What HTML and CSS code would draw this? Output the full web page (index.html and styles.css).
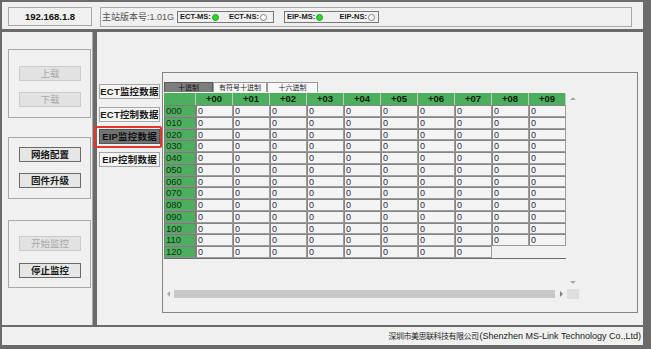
FILE: index.html
```html
<!DOCTYPE html>
<html lang="zh-CN">
<head>
<meta charset="utf-8">
<title>监控</title>
<link rel="stylesheet" href="styles.css">
</head>
<body>
<div class="app">
  <header class="topbar">
    <div class="ip">192.168.1.8</div>
    <div class="info">
      <span class="ver">主站版本号:1.01G</span>
      <div class="leds ect">
        <span class="led-label">ECT-MS:</span><span class="led on"></span>
        <span class="led-label second">ECT-NS:</span><span class="led"></span>
      </div>
      <div class="leds eip">
        <span class="led-label">EIP-MS:</span><span class="led on"></span>
        <span class="led-label second">EIP-NS:</span><span class="led"></span>
      </div>
    </div>
  </header>

  <div class="main">
    <aside class="side">
      <div class="group g1">
        <button class="btn" disabled>上载</button>
        <button class="btn" disabled>下载</button>
      </div>
      <div class="group g2">
        <button class="btn">网络配置</button>
        <button class="btn">固件升级</button>
      </div>
      <div class="group g3">
        <button class="btn" disabled>开始监控</button>
        <button class="btn">停止监控</button>
      </div>
    </aside>

    <section class="content">
      <nav class="views">
        <button class="view">ECT监控数据</button>
        <button class="view">ECT控制数据</button>
        <button class="view active">EIP监控数据</button>
        <button class="view">EIP控制数据</button>
      </nav>

      <div class="panel">
        <div class="gridctl">
          <div class="gtabs">
            <span class="gtab sel">十进制</span>
            <span class="gtab">有符号十进制</span>
            <span class="gtab">十六进制</span>
          </div>
          <div class="gview">
            <div class="grid">
              <div class="hc"></div><div class="hc">+00</div><div class="hc">+01</div><div class="hc">+02</div><div class="hc">+03</div><div class="hc">+04</div><div class="hc">+05</div><div class="hc">+06</div><div class="hc">+07</div><div class="hc">+08</div><div class="hc">+09</div>
              <div class="rl">000</div><div class="c">0</div><div class="c">0</div><div class="c">0</div><div class="c">0</div><div class="c">0</div><div class="c">0</div><div class="c">0</div><div class="c">0</div><div class="c">0</div><div class="c">0</div>
              <div class="rl">010</div><div class="c">0</div><div class="c">0</div><div class="c">0</div><div class="c">0</div><div class="c">0</div><div class="c">0</div><div class="c">0</div><div class="c">0</div><div class="c">0</div><div class="c">0</div>
              <div class="rl">020</div><div class="c">0</div><div class="c">0</div><div class="c">0</div><div class="c">0</div><div class="c">0</div><div class="c">0</div><div class="c">0</div><div class="c">0</div><div class="c">0</div><div class="c">0</div>
              <div class="rl">030</div><div class="c">0</div><div class="c">0</div><div class="c">0</div><div class="c">0</div><div class="c">0</div><div class="c">0</div><div class="c">0</div><div class="c">0</div><div class="c">0</div><div class="c">0</div>
              <div class="rl">040</div><div class="c">0</div><div class="c">0</div><div class="c">0</div><div class="c">0</div><div class="c">0</div><div class="c">0</div><div class="c">0</div><div class="c">0</div><div class="c">0</div><div class="c">0</div>
              <div class="rl">050</div><div class="c">0</div><div class="c">0</div><div class="c">0</div><div class="c">0</div><div class="c">0</div><div class="c">0</div><div class="c">0</div><div class="c">0</div><div class="c">0</div><div class="c">0</div>
              <div class="rl">060</div><div class="c">0</div><div class="c">0</div><div class="c">0</div><div class="c">0</div><div class="c">0</div><div class="c">0</div><div class="c">0</div><div class="c">0</div><div class="c">0</div><div class="c">0</div>
              <div class="rl">070</div><div class="c">0</div><div class="c">0</div><div class="c">0</div><div class="c">0</div><div class="c">0</div><div class="c">0</div><div class="c">0</div><div class="c">0</div><div class="c">0</div><div class="c">0</div>
              <div class="rl">080</div><div class="c">0</div><div class="c">0</div><div class="c">0</div><div class="c">0</div><div class="c">0</div><div class="c">0</div><div class="c">0</div><div class="c">0</div><div class="c">0</div><div class="c">0</div>
              <div class="rl">090</div><div class="c">0</div><div class="c">0</div><div class="c">0</div><div class="c">0</div><div class="c">0</div><div class="c">0</div><div class="c">0</div><div class="c">0</div><div class="c">0</div><div class="c">0</div>
              <div class="rl">100</div><div class="c">0</div><div class="c">0</div><div class="c">0</div><div class="c">0</div><div class="c">0</div><div class="c">0</div><div class="c">0</div><div class="c">0</div><div class="c">0</div><div class="c">0</div>
              <div class="rl">110</div><div class="c">0</div><div class="c">0</div><div class="c">0</div><div class="c">0</div><div class="c">0</div><div class="c">0</div><div class="c">0</div><div class="c">0</div><div class="c">0</div><div class="c">0</div>
              <div class="rl">120</div><div class="c">0</div><div class="c">0</div><div class="c">0</div><div class="c">0</div><div class="c">0</div><div class="c">0</div><div class="c">0</div><div class="c">0</div>
            </div>
            <div class="vscroll"><span class="arr up"></span><span class="arr down"></span></div>
          </div>
          <div class="hscroll">
            <span class="harr"><span class="arr left"></span></span>
            <span class="thumb"></span>
            <span class="harr"><span class="arr right"></span></span>
            <span class="corner"></span>
          </div>
        </div>
      </div>
    </section>
  </div>

  <footer class="status"><span class="cn">深圳市美思联科技有限公司</span>(Shenzhen MS-Link Technology Co.,Ltd)</footer>
</div>
</body>
</html>
```

FILE: styles.css
```css
* { box-sizing: border-box; margin: 0; padding: 0; }
html, body { width: 651px; height: 349px; overflow: hidden; }
body {
  background: #6b6b6b;
  font-family: "Liberation Sans", "Noto Sans CJK SC", sans-serif;
  color: #111;
}
button { font-family: inherit; cursor: default; }

.app {
  height: 349px;
  display: flex;
  flex-direction: column;
  padding: 2px 8px 4px 2px;
}

/* ---------- top bar ---------- */
.topbar {
  height: 27px;
  background: #f0f0f0;
  display: flex;
  align-items: flex-start;
  padding: 5px 0 0 6px;
  gap: 8px;
}
.ip {
  width: 84px;
  height: 19px;
  border: 1px solid #a8a8a8;
  font-weight: bold;
  font-size: 9.5px;
  line-height: 17px;
  text-align: center;
}
.info {
  width: 532px;
  height: 20px;
  border: 1px solid #a8a8a8;
  display: flex;
  align-items: center;
  padding-left: 1px;
}
.ver { font-size: 9px; color: #555; margin-right: 3px; line-height: 12px; }
.leds {
  height: 12px;
  border: 1px solid #777;
  display: flex;
  align-items: center;
  padding-left: 2px;
  font-weight: bold;
  font-size: 7.5px;
  color: #1a1a1a;
}
.leds.ect { width: 97px; }
.leds.eip { width: 95px; margin-left: 10px; }
.led-label { line-height: 10px; }
.ect .second { margin-left: 10px; }
.eip .second { margin-left: 16px; }
.led {
  width: 7px;
  height: 7px;
  border-radius: 50%;
  border: 1px solid #808080;
  background: #fff;
  margin-left: 1px;
}
.led.on { background: #22dd22; border-color: #2a9a2a; }

/* ---------- main ---------- */
.main {
  margin-top: 3px;
  height: 293px;
  display: flex;
  gap: 4px;
}
.side {
  width: 91px;
  background: #f0f0f0;
  border-right: 1px solid #a8a8a8;
  padding: 17px 0 0 6px;
  display: flex;
  flex-direction: column;
}
.group {
  width: 83px;
  border: 1px solid #a8a8a8;
  display: flex;
  flex-direction: column;
  align-items: flex-start;
  padding-left: 10px;
}
.g1 { height: 69px; padding-top: 16px; gap: 11px; }
.g2 { height: 62px; margin-top: 19px; padding-top: 9px; gap: 11px; }
.g3 { height: 68px; margin-top: 21px; padding-top: 15px; gap: 12px; }
.btn {
  width: 62px;
  height: 15px;
  border: 1px solid #6a6a6a;
  background: #e6e6e6;
  font-size: 9.5px;
  font-weight: bold;
  line-height: 13px;
  color: #1a1a1a;
}
.btn:disabled {
  border-color: #cccccc;
  background: #e2e2e2;
  color: #a8a8a8;
  font-weight: normal;
}

.content {
  width: 546px;
  background: #f0f0f0;
  display: flex;
}
.views {
  width: 65px;
  padding: 52px 0 0 2px;
  display: flex;
  flex-direction: column;
  gap: 7.5px;
}
.view {
  width: 61px;
  height: 15px;
  border: 1px solid #a6a6a6;
  background: #f4f4f4;
  font-size: 9.5px;
  font-weight: bold;
  line-height: 13px;
  color: #1a1a1a;
  letter-spacing: 0.2px;
}
.view.active {
  position: relative;
  background: #727272;
  border-color: #555;
  color: #111;
}
.view.active::after {
  content: "";
  position: absolute;
  left: -6px;
  right: -3px;
  top: -4px;
  bottom: -5px;
  border: 2px solid #e8352c;
  border-radius: 2px;
}

/* ---------- data panel ---------- */
.panel {
  margin-top: 40px;
  width: 476px;
  height: 241px;
  border: 1px solid #858585;
  padding-top: 9px;
}
.gridctl { width: 416px; display: flex; flex-direction: column; }
.gtabs { height: 11px; display: flex; padding-left: 1px; align-items: flex-start; }
.gtab {
  height: 10px;
  border: 1px solid #9a9a9a;
  border-bottom: none;
  background: #f8f8f8;
  font-size: 7px;
  line-height: 9px;
  text-align: center;
  color: #222;
}
.gtab:nth-child(1) { width: 49px; }
.gtab:nth-child(2) { width: 54px; }
.gtab:nth-child(3) { width: 51px; }
.gtab.sel { background: #7d7d7d; border-color: #5a5a5a; color: #111; }

.gview { height: 196px; display: flex; }
.grid {
  margin-left: 1px;
  width: 402px;
  align-self: flex-start;
  display: grid;
  grid-template-columns: 32px repeat(10, 37px);
  grid-template-rows: 12px;
  grid-auto-rows: 11.75px;
  border-bottom: 1px solid #6e6e6e;
  margin-right: 1px;
}
.hc {
  background: #4caf5e;
  border-right: 1px solid #c4c4c4;
  font-weight: bold;
  font-size: 9.5px;
  line-height: 12px;
  text-align: center;
  color: #0c1a0c;
}
.rl {
  background: #4caf5e;
  border: 1px solid #7c7c7c;
  border-bottom-color: #8c8c8c;
  font-size: 9.5px;
  line-height: 10px;
  padding-left: 1px;
  color: #143014;
}
.c {
  background: #f4f4f4;
  border: 1px solid #858585;
  border-right-color: #9c9c9c;
  border-bottom-color: #9c9c9c;
  font-size: 9px;
  line-height: 10px;
  padding-left: 1px;
  color: #2b2b45;
}
.vscroll {
  width: 12px;
  height: 196px;
  display: flex;
  flex-direction: column;
  justify-content: space-between;
  align-items: center;
  padding: 4px 0 5px;
}
.arr { width: 0; height: 0; border: 3px solid transparent; }
.arr.up { border-bottom-color: #a8a8a8; border-top-width: 0; }
.arr.down { border-top-color: #a8a8a8; border-bottom-width: 0; }
.arr.left { border-right-color: #a8a8a8; border-left-width: 0; }
.arr.right { border-left-color: #808080; border-right-width: 0; }
.hscroll { height: 10px; display: flex; }
.harr { width: 11px; display: flex; align-items: center; justify-content: center; }
.harr:nth-of-type(3) { width: 12px; }
.thumb { width: 381px; height: 8px; margin-top: 1px; background: #c8c8c8; }
.corner { width: 12px; background: #dedede; }

/* ---------- status ---------- */
.status {
  margin-top: 2px;
  height: 18px;
  background: #f0f0f0;
  font-size: 9px;
  line-height: 18px;
  text-align: right;
  padding-right: 2px;
  color: #222;
}
.status .cn { font-size: 8px; letter-spacing: -0.5px; margin-right: 1px; }
```
